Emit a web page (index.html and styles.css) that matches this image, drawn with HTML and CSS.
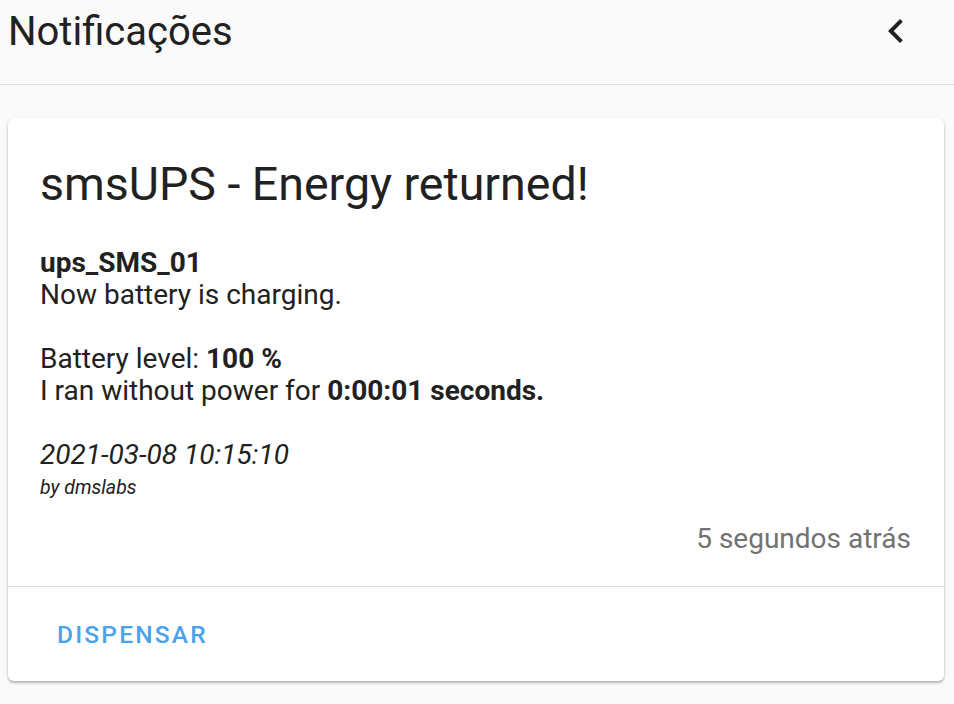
FILE: index.html
```html
<!DOCTYPE html>
<html lang="pt">
<head>
<meta charset="utf-8">
<title>Notificações</title>
<link rel="stylesheet" href="styles.css">
</head>
<body>
<header class="header">
  <div class="toolbar">
    <div class="title">Notificações</div>
    <button class="back" aria-label="Fechar">
      <svg viewBox="0 0 24 24" width="48" height="48"><path d="M15.41,16.58L10.83,12L15.41,7.41L14,6L8,12L14,18L15.41,16.58Z" fill="#212121"/></svg>
    </button>
  </div>
</header>
<main class="content">
  <section class="card">
    <div class="card-body">
      <h1 class="card-title">smsUPS - Energy returned!</h1>
      <div class="message">
        <p class="line"><b>ups_SMS_01</b></p>
        <p class="line">Now battery is charging.</p>
        <p class="line blank">&nbsp;</p>
        <p class="line">Battery level: <b>100 %</b></p>
        <p class="line">I ran without power for <b>0:00:01 seconds.</b></p>
        <p class="line blank">&nbsp;</p>
        <p class="line date">2021-03-08 10:15:10</p>
        <p class="by">by dmslabs</p>
      </div>
      <div class="time">5 segundos atrás</div>
    </div>
    <div class="card-actions">
      <button class="dismiss">DISPENSAR</button>
    </div>
  </section>
</main>
</body>
</html>
```

FILE: styles.css
```css
* { box-sizing: border-box; }

body {
  margin: 0;
  background: #fafafa;
  font-family: Roboto, "Noto Sans", sans-serif;
  color: #212121;
  width: 954px;
  height: 704px;
  overflow: hidden;
}

.header {
  height: 85px;
  border-bottom: 1px solid #dedede;
}

.toolbar {
  height: 62px;
  display: flex;
  align-items: center;
  justify-content: space-between;
  padding-left: 8px;
  padding-right: 34px;
}

.title {
  font-size: 40px;
  font-weight: 400;
  color: #212121;
}

.back {
  background: none;
  border: none;
  padding: 0;
  width: 48px;
  height: 48px;
  display: flex;
}

.content {
  padding: 33px 10px 0 8px;
}

.card {
  background: #fff;
  border-radius: 6px;
  box-shadow: 0 2px 3px rgba(0, 0, 0, 0.28), 0 0 2px rgba(0, 0, 0, 0.06);
  height: 563px;
  display: flex;
  flex-direction: column;
}

.card-body {
  padding: 38px 33px 0 32px;
  border-bottom: 1px solid #dcdcdc;
  height: 469px;
}

.card-title {
  margin: 0;
  font-size: 46.5px;
  line-height: 56px;
  font-weight: 400;
  color: #212121;
}

.message {
  margin-top: 35px;
}

.line {
  margin: 0;
  font-size: 28px;
  line-height: 32px;
}

.line b { font-weight: 700; }

.date {
  font-style: italic;
}

.by {
  margin: 0;
  font-size: 19.5px;
  line-height: 34px;
  font-style: italic;
}

.time {
  margin-top: 18px;
  text-align: right;
  font-size: 28px;
  line-height: 32px;
  color: #727272;
}

.card-actions {
  flex: 1;
  display: flex;
  align-items: center;
  padding-left: 40px;
}

.dismiss {
  background: none;
  border: none;
  padding: 0 9px;
  font-family: Roboto, "Noto Sans", sans-serif;
  font-size: 24.5px;
  font-weight: 500;
  letter-spacing: 2.2px;
  color: #49a3ec;
}
```
